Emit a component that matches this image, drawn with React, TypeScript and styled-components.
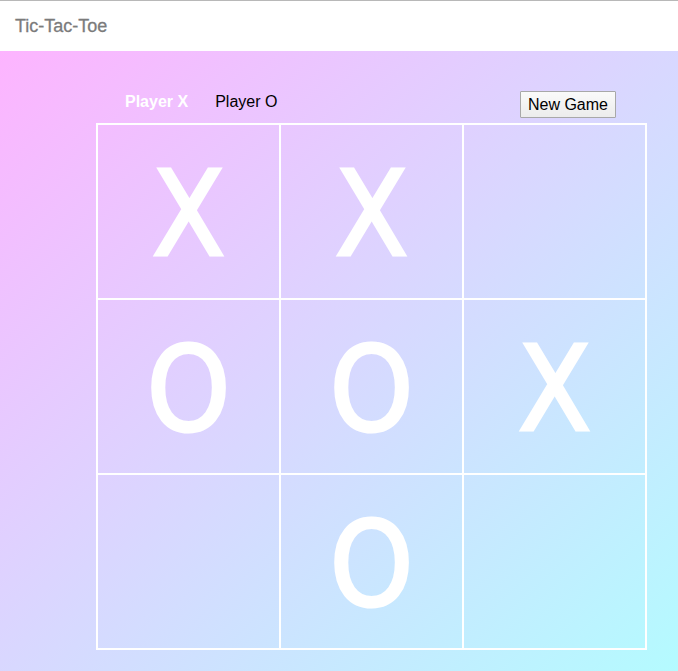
import React from "react";
import styled, { createGlobalStyle } from "styled-components";

const Global = createGlobalStyle`
  html, body { margin: 0; padding: 0; }
  body { font-family: "Liberation Sans", Arial, sans-serif; background: #fff; }
`;

const Page = styled.div`
  width: 678px;
  min-height: 671px;
  display: flex;
  flex-direction: column;
`;

const Header = styled.header`
  height: 50px;
  border-top: 1px solid #b8b8b8;
  background: #fff;
  display: flex;
  align-items: center;
  padding-left: 15px;
  font-family: "Liberation Sans", Arial, sans-serif;
  font-size: 18px;
  color: #7b7b7b;
  -webkit-text-stroke: 0.3px #7b7b7b;
`;

const Main = styled.main`
  flex: 1;
  min-height: 620px;
  box-sizing: border-box;
  padding: 40px 32px 20px 96px;
  background: linear-gradient(to bottom right, #fdb4ff, #b4fbff);
`;

const TopRow = styled.div`
  display: flex;
  justify-content: space-between;
  align-items: flex-start;
  height: 32px;
  padding: 0 30px 0 29px;
`;

const Players = styled.div`
  display: flex;
  gap: 27px;
  line-height: 21px;
  font-size: 16px;
`;

const Player = styled.span<{ $active?: boolean }>`
  color: ${(p) => (p.$active ? "#fff" : "#000")};
  font-weight: ${(p) => (p.$active ? 600 : 400)};
`;

const Button = styled.button`
  height: 27px;
  padding: 0 7px;
  font-family: "Liberation Sans", Arial, sans-serif;
  font-size: 16px;
  color: #000;
  border: 1px solid #a8a8a8;
  border-radius: 1px;
  background: linear-gradient(#fafafa, #ececec);
`;

const Board = styled.div`
  width: 551px;
  box-sizing: border-box;
  border: 1px solid #fff;
  display: grid;
  grid-template-columns: repeat(3, 183px);
  grid-template-rows: repeat(3, 175px);
`;

const Cell = styled.div`
  box-sizing: border-box;
  border: 1px solid #fff;
  display: flex;
  align-items: center;
  justify-content: center;
  color: #fff;
  font-family: "Liberation Sans Narrow", "DejaVu Sans Condensed", "Noto Sans", sans-serif;
  font-size: 118px;
  line-height: 1;
  padding-top: 4px;
  -webkit-text-stroke: 3px #fff;
`;

const cells = ["X", "X", "", "O", "O", "X", "", "O", ""];

export default function App() {
  return (
    <Page>
      <Global />
      <Header>Tic-Tac-Toe</Header>
      <Main>
        <TopRow>
          <Players>
            <Player $active>Player X</Player>
            <Player>Player O</Player>
          </Players>
          <Button>New Game</Button>
        </TopRow>
        <Board>
          {cells.map((c, i) => (
            <Cell key={i}>{c}</Cell>
          ))}
        </Board>
      </Main>
    </Page>
  );
}
